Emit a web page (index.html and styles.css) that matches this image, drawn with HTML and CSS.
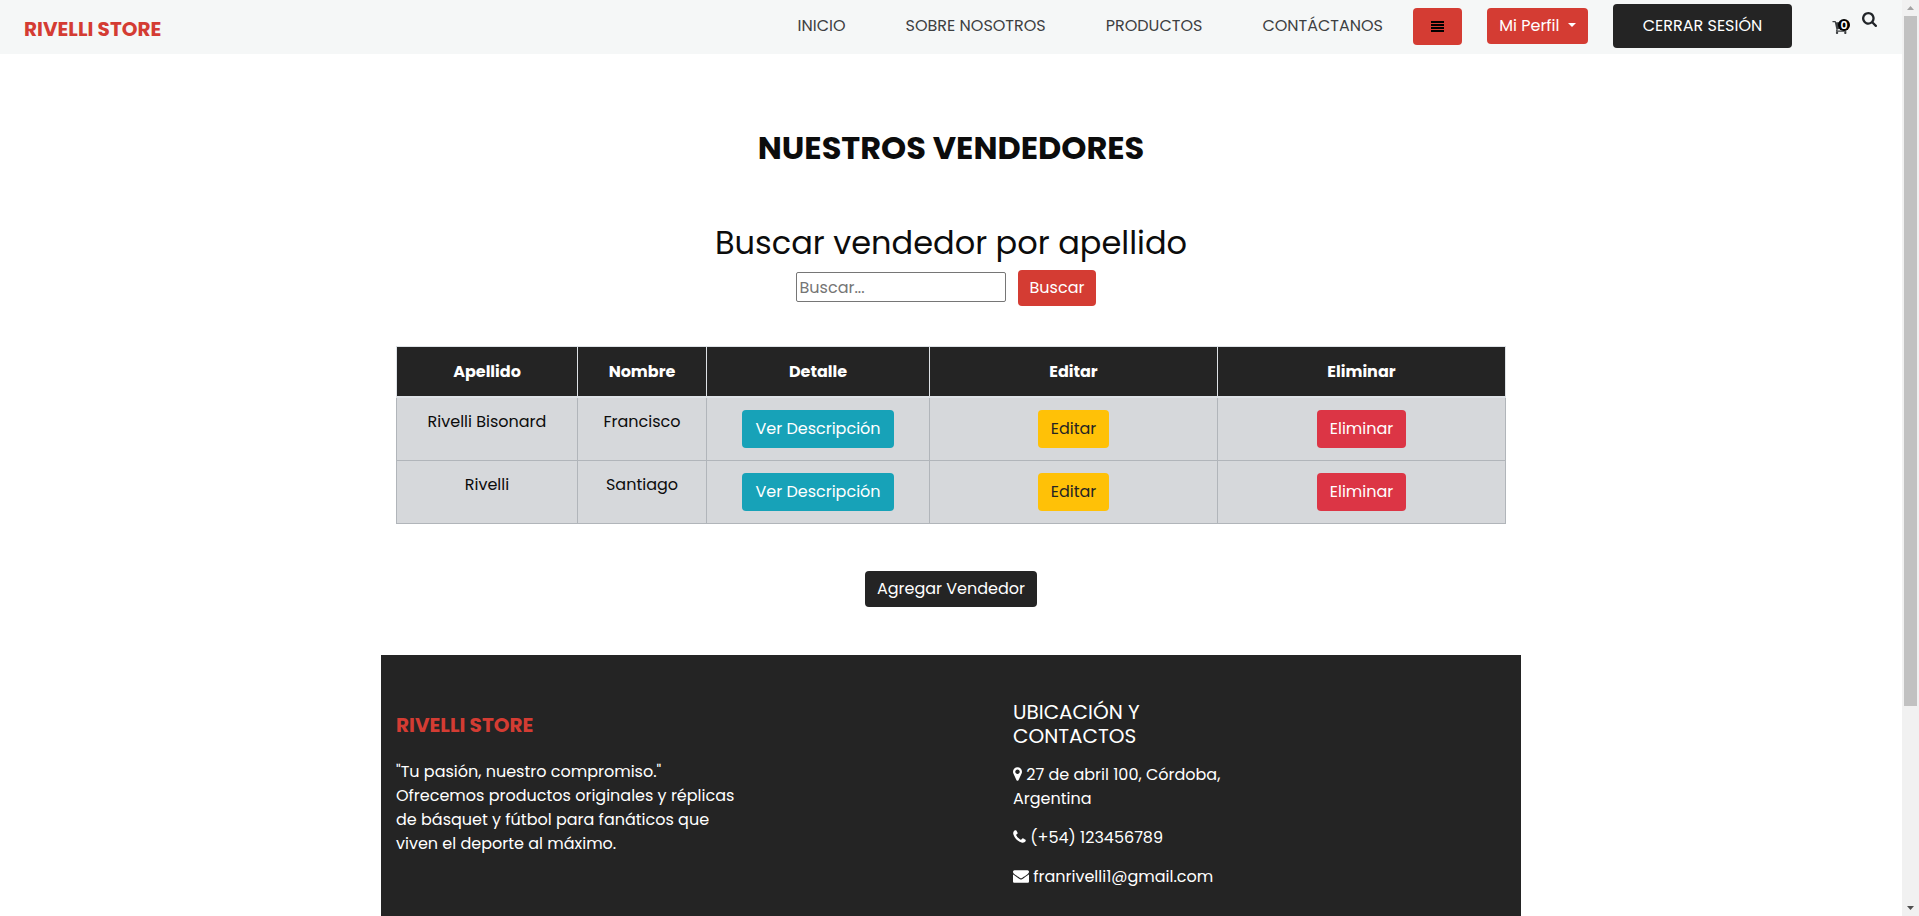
FILE: index.html
```html
<!DOCTYPE html>
<html lang="es">
<head>
<meta charset="utf-8">
<title>Rivelli Store - Vendedores</title>
<link rel="stylesheet" href="styles.css">
</head>
<body>
<div class="page">
  <header class="topbar">
    <a class="brand" href="#">RIVELLI STORE</a>
    <nav class="nav">
      <div class="nav-links">
        <a href="#">INICIO</a>
        <a href="#">SOBRE NOSOTROS</a>
        <a href="#">PRODUCTOS</a>
        <a href="#">CONTÁCTANOS</a>
      </div>
      <div class="nav-actions">
        <button class="btn btn-menu" type="button" aria-label="Menú">
          <svg class="icon-menu" viewBox="0 0 13 11"><path d="M0 0h13v2H0zM0 3h13v2H0zM0 6h13v2H0zM0 9h13v2H0z"/></svg>
        </button>
        <button class="btn btn-red btn-profile" type="button">Mi Perfil <span class="caret"></span></button>
        <button class="btn btn-dark btn-logout" type="button">CERRAR SESIÓN</button>
      </div>
      <div class="nav-icons">
        <a class="cart" href="#" aria-label="Carrito">
          <svg class="icon-cart" viewBox="64 256 1664 1408"><path d="M704 1536q0 52-38 90t-90 38-90-38-38-90 38-90 90-38 90 38 38 90zm896 0q0 52-38 90t-90 38-90-38-38-90 38-90 90-38 90 38 38 90zm128-1088v512q0 24-16.500 42.500t-40.500 21.500l-1044 122q13 60 13 70 0 16-24 64h920q26 0 45 19t19 45-19 45-45 19h-1024q-26 0-45-19t-19-45q0-11 8-31.500t16-36 21.500-40 15.500-29.500l-177-823h-204q-26 0-45-19t-19-45 19-45 45-19h256q16 0 28.500 6.500t19.500 15.500 13 24.500 8 26 5.500 29.500 4.500 26h1201q26 0 45 19t19 45z"/></svg>
          <span class="badge">0</span>
        </a>
        <a class="search-link" href="#" aria-label="Buscar">
          <svg class="icon-search" viewBox="64 128 1664 1664"><path d="M1216 832q0-185-131.500-316.500t-316.500-131.500-316.500 131.500-131.500 316.500 131.500 316.500 316.500 131.500 316.500-131.500 131.500-316.500zm512 832q0 52-38 90t-90 38q-54 0-90-38l-343-342q-179 124-399 124-143 0-273.500-55.500t-225-150-150-225-55.500-273.500 55.500-273.500 150-225 225-150 273.500-55.500 273.500 55.500 225 150 150 225 55.500 273.500q0 220-124 399l343 343q37 37 37 90z"/></svg>
        </a>
      </div>
    </nav>
  </header>

  <main class="container">
    <h1>NUESTROS VENDEDORES</h1>
    <form class="search">
      <label for="q">Buscar vendedor por apellido</label>
      <div class="search-row">
        <input id="q" type="text" placeholder="Buscar...">
        <button class="btn btn-red btn-search" type="button">Buscar</button>
      </div>
    </form>
    <table class="sellers">
      <colgroup><col class="c-last"><col class="c-first"><col class="c-detail"><col class="c-act"><col class="c-act"></colgroup>
      <thead>
        <tr><th>Apellido</th><th>Nombre</th><th>Detalle</th><th>Editar</th><th>Eliminar</th></tr>
      </thead>
      <tbody>
        <tr>
          <td>Rivelli Bisonard</td><td>Francisco</td>
          <td><a class="btn btn-lg btn-info" href="#">Ver Descripción</a></td>
          <td><a class="btn btn-lg btn-warning" href="#">Editar</a></td>
          <td><button class="btn btn-lg btn-danger" type="button">Eliminar</button></td>
        </tr>
        <tr>
          <td>Rivelli</td><td>Santiago</td>
          <td><a class="btn btn-lg btn-info" href="#">Ver Descripción</a></td>
          <td><a class="btn btn-lg btn-warning" href="#">Editar</a></td>
          <td><button class="btn btn-lg btn-danger" type="button">Eliminar</button></td>
        </tr>
      </tbody>
    </table>
    <div class="add-row"><a class="btn btn-dark" href="#">Agregar Vendedor</a></div>
  </main>

  <footer class="footer">
    <section class="about">
      <a class="brand" href="#">RIVELLI STORE</a>
      <p>"Tu pasión, nuestro compromiso."<br>Ofrecemos productos originales y réplicas<br>de básquet y fútbol para fanáticos que<br>viven el deporte al máximo.</p>
    </section>
    <section class="contact">
      <h2>UBICACIÓN Y<br>CONTACTOS</h2>
      <p><svg class="icon-pin" viewBox="384 0 1024 1792"><path d="M1152 640q0-106-75-181t-181-75-181 75-75 181 75 181 181 75 181-75 75-181zm256 0q0 109-33 179l-364 774q-16 33-47.500 52t-67.500 19-67.500-19-46.500-52l-365-774q-33-70-33-179 0-212 150-362t362-150 362 150 150 362z"/></svg> 27 de abril 100, Córdoba,<br>Argentina</p>
      <p><svg class="icon-phone" viewBox="192 0 1408 1792"><path d="M1600 1240q0 27-10 70.500t-21 68.500q-21 50-122 106-94 51-186 51-27 0-53-3.500t-57.500-12.500-47-14.500-55.500-20.500-49-18q-98-35-175-83-127-79-264-216t-216-264q-48-77-83-175-3-9-18-49t-20.500-55.500-14.500-47-12.500-57.500-3.500-53q0-92 51-186 56-101 106-122 25-11 68.500-21t70.500-10q14 0 21 3 18 6 53 76 11 19 30 54t35 63.500 31 53.500q3 4 17.500 25t21.500 35.500 7 28.500q0 20-28.500 50t-62 55-62 53-28.500 46q0 9 5 22.500t8.500 20.500 14 24 11.500 19q76 137 174 235t235 174q2 1 19 11.500t24 14 20.500 8.500 22.500 5q18 0 46-28.500t53-62 55-62 50-28.500q14 0 28.500 7t35.500 21.500 25 17.500q25 15 53.500 31t63.500 35 54 30q70 35 76 53 3 7 3 21z"/></svg> (+54) 123456789</p>
      <p><svg class="icon-mail" viewBox="0 0 1792 1792"><path d="M1792 710v794q0 66-47 113t-113 47h-1472q-66 0-113-47t-47-113v-794q44 49 101 87 362 246 497 345 57 42 92.500 65.500t94.500 48 110 24.500h2q51 0 110-24.500t94.500-48 92.500-65.500q170-123 498-345 57-39 100-87zm0-294q0 79-49 151t-122 123q-376 261-468 325-10 7-42.500 31t-54 38.500-52 32.500-57.500 27-50 9h-2q-23 0-50-9t-57.500-27-52-32.500-54-38.500-42.500-31q-91-64-262-182.500t-205-142.500q-62-42-117-115.500t-55-136.500q0-78 41.500-130t118.500-52h1472q65 0 112.500 47t47.500 113z"/></svg> franrivelli1@gmail.com</p>
    </section>
  </footer>
</div>
<div class="scrollbar" aria-hidden="true">
  <svg class="arrow arrow-up" viewBox="0 0 17 16"><path d="M5 10h7L8.500 6z"/></svg>
  <div class="track"><div class="thumb"></div></div>
  <svg class="arrow arrow-down" viewBox="0 0 17 16"><path d="M5 6h7L8.500 10z"/></svg>
</div>
</body>
</html>
```
FILE: styles.css
```css
* { box-sizing: border-box; }

body {
  margin: 0;
  height: 100vh;
  display: flex;
  overflow: hidden;
  font: 400 16px/24px Poppins, Inter, sans-serif;
  color: #0c0c0c;
  background: #fff;
}

a { color: inherit; text-decoration: none; }
button, input { font: inherit; }

.page { flex: 1; min-width: 0; overflow: hidden; }

.topbar {
  display: flex;
  align-items: flex-start;
  justify-content: space-between;
  min-height: 54px;
  padding: 4px 25px 4px 24px;
  background: #f5f7f7;
}

.brand {
  font-size: 20px;
  font-weight: 700;
  line-height: 24px;
  color: #d43c33;
}
.topbar .brand { margin-top: 13px; }

.nav, .nav-links, .nav-actions, .nav-icons { display: flex; }
.nav-links { gap: 60px; margin-right: 30px; color: #3d4042; line-height: 44px; }
.nav-actions { gap: 25px; align-items: flex-start; }
.nav-icons { gap: 12px; margin-left: 40px; align-items: flex-start; }

.btn {
  display: inline-block;
  border: 0;
  border-radius: 4px;
  padding: 6px 12px;
  text-align: center;
  white-space: nowrap;
  color: #fff;
  line-height: 24px;
  cursor: pointer;
}
.btn-red { background: #d43c33; }
.btn-dark { background: #242424; }
.btn-lg { padding: 7px 13px; vertical-align: middle; }
.btn-info { background: #17a2b8; }
.btn-warning { background: #ffc107; color: #242424; }
.btn-danger { background: #dc3545; }

.btn-menu {
  display: flex;
  align-items: center;
  justify-content: center;
  width: 49px;
  height: 37px;
  margin-top: 4px;
  background: #d43c33;
}
.btn-profile { min-width: 101px; margin-top: 4px; }
.btn-logout { min-width: 179px; padding: 10px 24px; }

.caret {
  display: inline-block;
  margin-left: 4px;
  vertical-align: 4px;
  border: 4px solid transparent;
  border-top-color: #fff;
  border-bottom: 0;
}

.icon-menu { width: 13px; height: 11px; fill: #000; }
.cart { position: relative; display: flex; width: 18px; margin-top: 17px; }
.icon-cart { width: 16px; height: 13px; fill: #3d4042; }
.badge {
  position: absolute;
  top: -2px;
  left: 6px;
  width: 12px;
  height: 12px;
  border-radius: 50%;
  background: #000;
  color: #fff;
  font-size: 11px;
  font-weight: 600;
  line-height: 12px;
  text-align: center;
}
.search-link { display: flex; margin-top: 8px; }
.icon-search { width: 15px; height: 15px; fill: #212529; }

.container {
  max-width: 1140px;
  margin: 0 auto;
  padding: 74px 15px 48px;
  text-align: center;
}

h1 { margin: 0 0 55px; font-size: 32px; line-height: 40px; font-weight: 700; }
.search label { display: block; font-size: 32px; line-height: 40px; }
.search-row {
  display: flex;
  justify-content: center;
  align-items: flex-start;
  gap: 12px;
  margin: 7px 10px 40px 0;
}
.search input {
  width: 210px;
  height: 30px;
  margin-top: 2px;
  padding: 0 3px;
  border: 1px solid #767676;
  border-radius: 2px;
}
.search input::placeholder { color: #757575; }

.sellers {
  width: 100%;
  table-layout: fixed;
  border-collapse: collapse;
}
.c-last { width: 181px; }
.c-first { width: 129px; }
.c-detail { width: 223px; }
.sellers th {
  padding: 13px 12px 12px;
  border: 1px solid #dee2e6;
  border-bottom-width: 2px;
  background: #242424;
  color: #fff;
  font-weight: 700;
}
.sellers td {
  padding: 12px;
  border: 1px solid #b1b5ba;
  background: #d6d8db;
  vertical-align: top;
}
.add-row { margin-top: 47px; }

.footer {
  display: grid;
  grid-template-columns: 617px 1fr;
  max-width: 1140px;
  min-height: 400px;
  margin: 0 auto;
  padding: 45px 15px;
  background: #242424;
  color: #fff;
}
.about { padding-top: 13px; }
.about p { margin: 21px 0 0; }
.contact h2 { margin: 0 0 15px; font-size: 20px; line-height: 24px; font-weight: 400; }
.contact p { margin: 0 0 15px; }
.contact svg { height: 16px; fill: #fff; vertical-align: -2px; }
.icon-pin { width: 9px; }
.icon-phone { width: 13px; }
.icon-mail { width: 16px; }

.scrollbar { display: flex; flex-direction: column; width: 17px; background: #f1f1f1; }
.arrow { width: 17px; height: 16px; }
.arrow-up { fill: #a3a3a3; }
.arrow-down { fill: #505050; }
.track { flex: 1; }
.thumb { height: 78%; margin: 0 2px; background: #c1c1c1; }
```
